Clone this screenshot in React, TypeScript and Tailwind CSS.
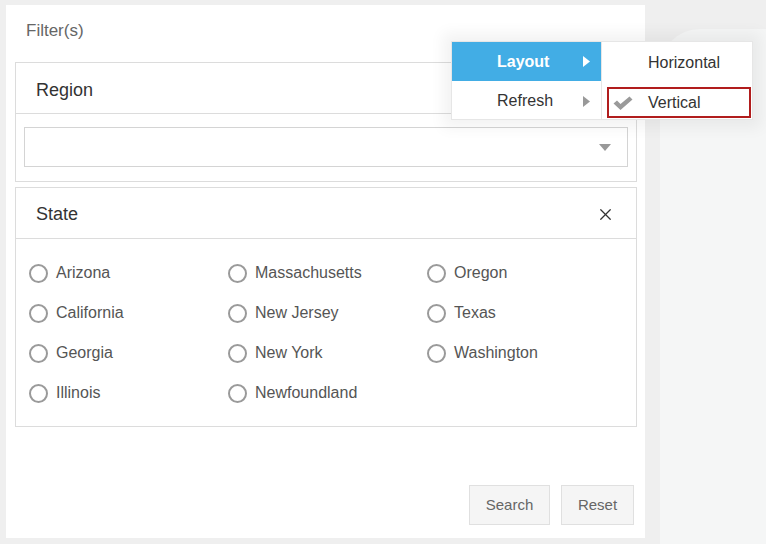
import { X } from 'lucide-react'

const states = [
  ['Arizona', 'Massachusetts', 'Oregon'],
  ['California', 'New Jersey', 'Texas'],
  ['Georgia', 'New York', 'Washington'],
  ['Illinois', 'Newfoundland', null],
]

function Radio({ label }: { label: string }) {
  return (
    <div className="flex h-[40px] items-center">
      <span className="h-[19px] w-[19px] shrink-0 rounded-full border-[2.5px] border-[#9a9a9a] bg-white" />
      <span className="ml-[8px] text-[16px] text-[#555]">{label}</span>
    </div>
  )
}

function Arrow({ color }: { color: string }) {
  return (
    <svg width="7" height="11" viewBox="0 0 7 11" className="shrink-0">
      <path d="M0 0 L7 5.5 L0 11 Z" fill={color} />
    </svg>
  )
}

function ContextMenu() {
  return (
    <div className="absolute left-[451px] top-[41px] flex shadow-[0_0_14px_8px_rgba(0,0,0,0.05)]">
      <div className="w-[151px] border border-[#e6e6e6] bg-white">
        <div className="flex h-[39px] items-center bg-[#42ade5] pl-[45px] pr-[11px]">
          <span className="flex-1 text-[16px] font-bold text-white">Layout</span>
          <Arrow color="#ffffff" />
        </div>
        <div className="flex h-[38px] items-center pl-[45px] pr-[11px] pt-[2px]">
          <span className="flex-1 text-[16px] text-[#333]">Refresh</span>
          <Arrow color="#999999" />
        </div>
      </div>
      <div className="w-[151px] border border-l-0 border-[#e6e6e6] bg-white pl-[5px] pr-[1px]">
        <div className="flex h-[45px] items-center pb-[4px] pl-[41px] text-[16px] text-[#333]">Horizontal</div>
        <div className="flex h-[31px] items-center border-2 border-[#b11d1d] pl-[4px] text-[16px] text-[#333]">
          <svg width="20" height="14" viewBox="0 0 20 14" className="shrink-0">
            <path d="M0.5 7.5 L4 4.5 L7.5 8 L16.5 0.5 L19.5 3.5 L7.5 14 Z" fill="#9a9a9a" />
          </svg>
          <span className="ml-[15px]">Vertical</span>
        </div>
      </div>
    </div>
  )
}

export default function App() {
  return (
    <div
      className="relative flex h-[544px] w-[766px] overflow-hidden bg-[#efefef] pl-[6px] pt-[5px]"
      style={{ fontFamily: '"Liberation Sans", Arial, sans-serif' }}
    >
      <div className="flex h-[533px] w-[639px] flex-col bg-white pl-[9px] pr-[8px]">
        <div className="pl-[11px] pt-[17px] text-[17px] leading-[18px] text-[#666]">Filter(s)</div>

        <div className="mt-[22px] border border-[#dcdcdc]">
          <div className="flex h-[51px] items-center border-b border-[#dcdcdc] pl-[20px] pt-[5px] text-[18px] text-[#333]">
            Region
          </div>
          <div className="px-[8px] pb-[14px] pt-[13px]">
            <div className="flex h-[40px] items-center justify-end border border-[#d4d4d4] pr-[16px]">
              <svg width="12" height="7" viewBox="0 0 12 7">
                <path d="M0 0 L12 0 L6 7 Z" fill="#999999" />
              </svg>
            </div>
          </div>
        </div>

        <div className="mt-[5px] border border-[#dcdcdc]">
          <div className="flex h-[51px] items-center justify-between border-b border-[#dcdcdc] pl-[20px] pr-[21px] pt-[2px] text-[18px] text-[#333]">
            <span className="pt-[1px]">State</span>
            <X className="h-[19px] w-[19px] text-[#333]" strokeWidth={1.6} />
          </div>
          <div className="grid grid-cols-[199px_199px_1fr] pb-[13px] pl-[13px] pt-[14px]">
            {states.flat().map((s, i) => (s ? <Radio key={i} label={s} /> : <div key={i} />))}
          </div>
        </div>

        <div className="mt-auto mb-[13px] flex justify-end gap-[11px] pr-[3px]">
          <button className="h-[40px] w-[81px] border border-[#e0e0e0] bg-[#f5f5f5] text-[15px] text-[#666]">
            Search
          </button>
          <button className="h-[40px] w-[73px] border border-[#e0e0e0] bg-[#f5f5f5] text-[15px] text-[#666]">
            Reset
          </button>
        </div>
      </div>

      <div className="ml-[15px] mt-[24px] flex-1 rounded-tl-[40px] bg-[#f5f6f6]" />

      <ContextMenu />
    </div>
  )
}
